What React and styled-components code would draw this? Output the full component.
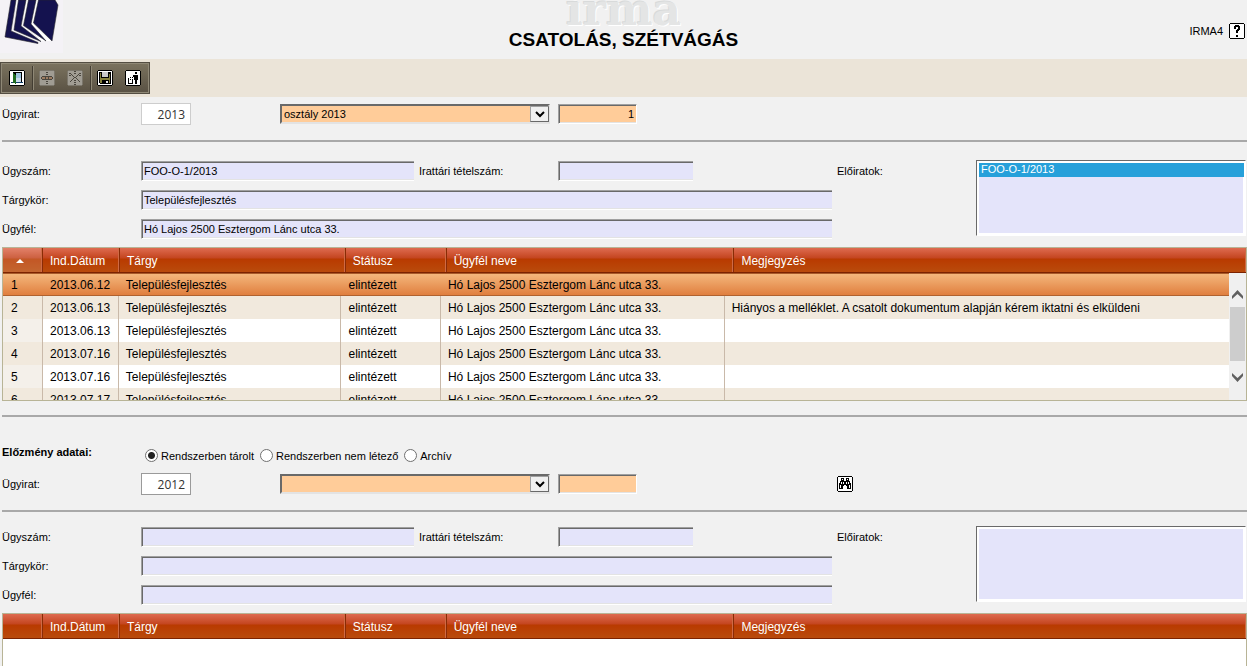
import { useState } from 'react';
import styled, { createGlobalStyle } from 'styled-components';

const rows = [
    { date: '2013.06.12', note: '' },
    { date: '2013.06.13', note: 'Hiányos a melléklet. A csatolt dokumentum alapján kérem iktatni és elküldeni' },
    { date: '2013.06.13', note: '' },
    { date: '2013.07.16', note: '' },
    { date: '2013.07.16', note: '' },
    { date: '2013.07.17', note: '' },
];

const sources = ['Rendszerben tárolt', 'Rendszerben nem létező', 'Archív'];

// 16x16 pixel icons share the same frame
const Frame = ({ faded, children }) => (
    <svg width="16" height="16" viewBox="0 0 16 16" shapeRendering="crispEdges" aria-hidden="true">
        <path d="M1 0h14v1h1v14h-1v1H1v-1H0V1h1z" fill={faded ? '#7b766b' : '#000'} />
        <path d="M1 1h14v14H1z" fill={faded ? '#a09c93' : '#fff'} />
        {children}
    </svg>
);

const DoorIcon = () => (
    <Frame>
        <path d="M4 2h9v10H4z" fill="#000" />
        <path d="M7 3h5v9H7z" fill="#9fc4de" />
        <path d="M7 8h5v4H7z" fill="#c9dcea" />
        <path d="M4 3h1v1h1v1h1v9H6v-1H4z" fill="#1f6b1f" />
        <path d="M2 12h2v1H2zM7 12h7v1H7z" fill="#14406b" />
    </Frame>
);

const AttachIcon = () => (
    <Frame faded>
        <path d="M7 2h2v1H7zM7 4h2v1H7zM7 11h2v1H7zM7 13h2v1H7z" fill="#4a463e" />
        <path d="M3 6h10v1h1v2h-1v1H3V9H2V7h1z" fill="#4a463e" />
        <path d="M3 7h3v2H3zM7 7h2v2H7zM10 7h3v2h-3z" fill="#9c7c62" />
    </Frame>
);

const CutIcon = () => (
    <Frame faded>
        <path d="M7 1h2v1H7zM7 3h2v1H7zM7 10h2v1H7zM7 12h2v1H7zM7 14h2v1H7z" fill="#4a463e" />
        <path
            d="M2 3h2v1H2zM4 4h1v1H4zM2 5h2v1H2zM5 5h1v1H5zM6 6h1v1H6zM7 7h2v1H7zM6 8h1v1H6zM5 9h1v1H5zM4 10h1v1H4zM3 11h1v1H3zM12 3h2v1h-2zM11 4h1v1h-1zM12 5h2v1h-2zM10 5h1v1h-1zM9 6h1v1H9zM9 8h1v1H9zM10 9h1v1h-1zM11 10h1v1h-1zM12 11h1v1h-1z"
            fill="#4a463e"
        />
    </Frame>
);

const SaveIcon = () => (
    <Frame>
        <path d="M2 2h12v12H3v-1H2z" fill="#000" />
        <path d="M3 3h1v10H3zM12 4h1v9h-1zM4 8h8v2H4z" fill="#85803a" />
        <path d="M4 9h1v4H4z" fill="#85803a" />
        <path d="M5 2h6v5H5z" fill="#c9c9c9" />
        <path d="M9 11h2v2H9z" fill="#e8e8e8" />
    </Frame>
);

const BinIcon = () => (
    <Frame>
        <path
            d="M10 2h2v2h-2zM8 5h5v5h-1v4h-2v-4H9V7H8V6H8zM3 8h1v1H3zM3 9h1v4h3V9h1v5H3zM5 7h1v1H5zM7 7h1v1H7zM5 9h1v1H5z"
            fill="#000"
        />
    </Frame>
);

const SearchIcon = () => (
    <Frame>
        <path d="M4 2h3v3h2V2h3v3h1v2h1v6h-4v-3H9V9H7v1H6v3H2V7h1V5h1z" fill="#000" />
        <path d="M5 3h1v1H5zM10 3h1v1h-1zM4 6h1v2H4zM11 6h1v2h-1zM3 9h1v3H3zM12 9h1v3h-1zM6 6h1v2H6zM9 6h1v2H9z" fill="#fff" />
    </Frame>
);

const HelpIcon = () => (
    <Frame>
        <path d="M6 2h4v1h1v4h-1v1H9v2H7V7h1V6h1V4H7v2H5V3h1zM7 12h2v2H7z" fill="#000" />
    </Frame>
);

const Logo = () => (
    <svg width="63" height="53" viewBox="0 0 63 53" aria-hidden="true">
        <path d="M0 0h63v53H0z" fill="#f4f2f6" />
        <path d="M11 0h45l2 5-6 36H40z" fill="#fff" />
        <g fill="#14124f" stroke="#26262b" strokeWidth="0.6">
            <path d="M11 0h5l-5 31 27 11.500v1L5 37z" />
            <path d="M18.500 0H26l-5 26 20 15.500L14 30z" />
            <path d="M28.500 0H36l-5 24 15 17-22.500-15.500z" />
            <path d="M38.500 0H55l3 5-6 36-18.500-18z" />
        </g>
    </svg>
);

const Chevron = ({ up }) => (
    <svg width="11" height="9" viewBox="0 0 11 9" aria-hidden="true">
        <path d={up ? 'M5.500 0L11 6v3L5.500 4 0 9V6z' : 'M5.500 9L11 3V0L5.500 5 0 0v3z'} fill="#606060" />
    </svg>
);

const CaseRow = ({ id, year, department, number, active, children }) => (
    <CaseGrid>
        <Label htmlFor={`${id}-year`}>Ügyirat:</Label>
        <CaseInputs>
            <YearInput id={`${id}-year`} defaultValue={year} $active={active} />
            <SelectBox>
                <Select aria-label="Osztály" defaultValue={department}>
                    <option>{department}</option>
                </Select>
                <SelectArrow>
                    <svg width="10" height="7" viewBox="0 0 10 7" aria-hidden="true">
                        <path d="M1 1l4 4 4-4" fill="none" stroke="#000" strokeWidth="2" />
                    </svg>
                </SelectArrow>
            </SelectBox>
        </CaseInputs>
        <NumberInput aria-label="Sorszám" defaultValue={number} />
        {children}
    </CaseGrid>
);

const Details = ({ id, number, subject, client, previous }) => (
    <DetailsGrid>
        <Label htmlFor={`${id}-number`}>Ügyszám:</Label>
        <Field id={`${id}-number`} defaultValue={number} />
        <Label htmlFor={`${id}-item`}>Irattári tételszám:</Label>
        <ShortField id={`${id}-item`} />
        <Label htmlFor={`${id}-previous`}>Előiratok:</Label>
        <ListBox id={`${id}-previous`} size="4" defaultValue={previous}>
            {previous && <option>{previous}</option>}
        </ListBox>
        <RowLabel htmlFor={`${id}-subject`}>Tárgykör:</RowLabel>
        <WideField id={`${id}-subject`} defaultValue={subject} />
        <RowLabel htmlFor={`${id}-client`}>Ügyfél:</RowLabel>
        <WideField id={`${id}-client`} defaultValue={client} />
    </DetailsGrid>
);

const DocumentTable = ({ items, sorted, fill }) => {
    const [selected, setSelected] = useState(0);

    return (
        <TableFrame $fill={fill}>
            <Table>
                <thead>
                    <HeadRow>
                        <HeadCell $sorted={sorted} aria-label="Sorszám">
                            {sorted && (
                                <svg width="8" height="4" viewBox="0 0 8 4" aria-hidden="true">
                                    <path d="M4 0l4 4H0z" fill="#fff" />
                                </svg>
                            )}
                        </HeadCell>
                        <HeadCell>Ind.Dátum</HeadCell>
                        <HeadCell>Tárgy</HeadCell>
                        <HeadCell>Státusz</HeadCell>
                        <HeadCell>Ügyfél neve</HeadCell>
                        <HeadCell>Megjegyzés</HeadCell>
                    </HeadRow>
                </thead>
                <TableBody $scroll={items.length > 0}>
                    {items.map((item, i) => (
                        <BodyRow key={i} $selected={i === selected} onClick={() => setSelected(i)}>
                            <Cell>{i + 1}</Cell>
                            <Cell>{item.date}</Cell>
                            <Cell>Településfejlesztés</Cell>
                            <Cell>elintézett</Cell>
                            <Cell>Hó Lajos 2500 Esztergom Lánc utca 33.</Cell>
                            <Cell>{item.note}</Cell>
                        </BodyRow>
                    ))}
                </TableBody>
            </Table>
            {items.length > 0 && (
                <ScrollBar>
                    <ScrollButton aria-label="Fel"><Chevron up /></ScrollButton>
                    <ScrollThumb />
                    <ScrollButton aria-label="Le"><Chevron /></ScrollButton>
                </ScrollBar>
            )}
        </TableFrame>
    );
};

const App = () => {
    const [source, setSource] = useState(sources[0]);

    return (
        <Page>
            <GlobalStyle />
            <Header>
                <Logo />
                <Heading>
                    <Watermark aria-hidden="true">irma</Watermark>
                    <Title>CSATOLÁS, SZÉTVÁGÁS</Title>
                </Heading>
                <Help>
                    IRMA4
                    <IconButton aria-label="Súgó"><HelpIcon /></IconButton>
                </Help>
            </Header>
            <ToolStrip>
                <Toolbar>
                    <ToolGroup><IconButton aria-label="Kilépés"><DoorIcon /></IconButton></ToolGroup>
                    <ToolGroup>
                        <IconButton aria-label="Csatolás" disabled><AttachIcon /></IconButton>
                        <IconButton aria-label="Szétvágás" disabled><CutIcon /></IconButton>
                    </ToolGroup>
                    <ToolGroup>
                        <IconButton aria-label="Mentés"><SaveIcon /></IconButton>
                        <IconButton aria-label="Törlés"><BinIcon /></IconButton>
                    </ToolGroup>
                </Toolbar>
            </ToolStrip>

            <CaseRow id="case" year="2013" department="osztály 2013" number="1" />
            <Line />
            <Details
                id="case"
                number="FOO-O-1/2013"
                subject="Településfejlesztés"
                client="Hó Lajos 2500 Esztergom Lánc utca 33."
                previous="FOO-O-1/2013"
            />
            <DocumentTable items={rows} sorted />

            <SectionLine />
            <SourceRow>
                <SourceTitle id="source-title">Előzmény adatai:</SourceTitle>
                <Radios role="radiogroup" aria-labelledby="source-title">
                    {sources.map((name) => (
                        <RadioLabel key={name}>
                            <Radio name="source" checked={source === name} onChange={() => setSource(name)} />
                            {name}
                        </RadioLabel>
                    ))}
                </Radios>
            </SourceRow>
            <CaseRow id="prev" year="2012" department="" number="" active>
                <SearchButton aria-label="Keresés"><SearchIcon /></SearchButton>
            </CaseRow>
            <Line $tight />
            <Details id="prev" />
            <DocumentTable items={[]} fill />
        </Page>
    );
};

export default App;

const GlobalStyle = createGlobalStyle`
    * {
        box-sizing : border-box;
    }
    body {
        margin : 0;
        background : #f1f1f1;
    }
    body, button, input, select {
        font-family : "Liberation Sans", Arial, sans-serif;
        font-size : 11px;
        color : #000;
    }
`

const Page = styled.div`
    display : flex;
    flex-direction : column;
    height : 100vh;
    min-width : 1000px;
    overflow : hidden;
`

const Header = styled.header`
    display : grid;
    grid-template-columns : 1fr auto 1fr;
    flex : none;
    height : 59px;
    overflow : hidden;
`

const Heading = styled.div`
    display : flex;
    flex-direction : column;
    align-items : center;
    justify-content : flex-end;
    padding-bottom : 8px;
`

const Watermark = styled.span`
    margin-bottom : 9px;
    font-family : "DejaVu Serif", serif;
    font-size : 44px;
    font-weight : bold;
    line-height : 20px;
    color : #e4e5e5;
    text-shadow : 1px 1px 0 #fff, -1px -1px 0 #d8dada;
`

const Title = styled.h1`
    margin : 0;
    font-size : 19px;
    line-height : 22px;
`

const Help = styled.div`
    display : flex;
    align-items : center;
    justify-content : flex-end;
    gap : 6px;
    padding : 3px 2px 0 0;
`

const IconButton = styled.button.attrs({ type: 'button' })`
    display : block;
    width : 16px;
    height : 16px;
    padding : 0;
    border : 0;
    background : none;
`

const ToolStrip = styled.div`
    flex : none;
    height : 38px;
    padding-top : 3px;
    background : #ebe4d8;
`

const Toolbar = styled.div`
    display : flex;
    align-items : center;
    width : 150px;
    height : 32px;
    padding-left : 2px;
    border : 1px solid #544e42;
    box-shadow : inset 0 0 0 1px #8f8876;
    background : linear-gradient(#7b735f, #595143);
`

const ToolGroup = styled.div`
    display : flex;
    align-items : center;
    gap : 12px;
    height : 24px;
    padding : 0 7px 0 6px;

    & + & {
        border-left : 1px solid #433d32;
        box-shadow : inset 1px 0 0 #8f8876;
    }
`

const Label = styled.label`
    line-height : 14px;
`

const RowLabel = styled(Label)`
    grid-column : 1;
`

const FormGrid = styled.div`
    display : grid;
    grid-template-columns : 139fr 278fr 139fr 279fr 139fr 270fr;
    align-items : center;
    flex : none;
    padding : 0 1px 0 2px;
`

const CaseGrid = styled(FormGrid)`
    height : 34px;
    margin-bottom : 9px;
`

const CaseInputs = styled.div`
    display : flex;
    grid-column : 2 / 4;
    align-items : center;
    justify-content : space-between;
    padding-right : 8px;
`

const YearInput = styled.input`
    width : 50px;
    height : 22px;
    padding : 0 5px;
    border : 1px solid ${({ $active }) => ($active ? '#9a9a9a' : '#cdcdcd')};
    background : #fff;
    color : #333;
    font-family : "Open Sans", sans-serif;
    font-size : 12px;
    text-align : right;
`

const SelectBox = styled.div`
    position : relative;
    width : 270px;
    height : 20px;
`

const Select = styled.select`
    width : 100%;
    height : 100%;
    padding : 0 2px;
    border : 2px solid;
    border-color : #696969 #e3e3e3 #e3e3e3 #696969;
    border-radius : 0;
    background : #ffcc99;
    appearance : none;
`

const SelectArrow = styled.span`
    position : absolute;
    top : 2px;
    right : 1px;
    display : flex;
    align-items : center;
    justify-content : center;
    width : 19px;
    height : 16px;
    border : 1px solid;
    border-color : #a0a0a0 #696969 #696969 #a0a0a0;
    background : #f0f0f0;
    pointer-events : none;
`

const SunkenInput = styled.input`
    width : 100%;
    height : 20px;
    padding : 0 2px;
    border : 1px solid;
    border-color : #a0a0a0 #fff #fff #a0a0a0;
    background : #e4e4fa;
    box-shadow : inset 1px 1px 0 #696969, inset 0 -1px 0 #e3e3e3;
`

const NumberInput = styled(SunkenInput)`
    width : 79px;
    background : #ffcc99;
    text-align : right;
`

const SearchButton = styled(IconButton)`
    grid-column : 5;
`

const DetailsGrid = styled(FormGrid)`
    grid-template-rows : repeat(3, 29px);
    margin-bottom : 4px;
`

const Field = styled(SunkenInput)`
    width : auto;
    margin-right : 5px;
    border-right : 0;
`

const ShortField = styled(SunkenInput)`
    width : 135px;
    border-right : 0;
`

const WideField = styled(Field)`
    grid-column : 2 / 5;
`

const ListBox = styled.select`
    grid-area : 1 / 6 / 4 / 7;
    align-self : start;
    height : 76px;
    margin-top : 4px;
    padding : 2px 1px 2px 2px;
    border : 1px solid;
    border-color : #696969 #fff #fff #696969;
    border-radius : 0;
    outline : 0;
    background : #e4e4fa;
    box-shadow : inset 0 0 0 2px #fff;
    overflow : hidden;

    option {
        height : 14px;
        min-height : 14px;
        padding : 0 2px;
        line-height : 14px;
    }
    option:checked {
        background : #26a0da linear-gradient(#26a0da, #26a0da);
        color : #fff;
    }
`

const Line = styled.hr`
    flex : none;
    width : auto;
    height : 2px;
    margin : 0 0 ${({ $tight }) => ($tight ? '10px' : '14px')} 2px;
    border : 0;
    background : #a9a9a9;
`

const SectionLine = styled(Line)`
    margin : 14px 0 0 2px;
`

const SourceRow = styled.div`
    display : grid;
    grid-template-columns : 139fr 1105fr;
    align-items : center;
    flex : none;
    height : 50px;
    padding : 21px 1px 0 2px;
`

const SourceTitle = styled.strong`
    padding-bottom : 2px;
    line-height : 14px;
`

const Radios = styled.div`
    display : flex;
    gap : 6px;
    padding : 6px 0 0 4px;
`

const RadioLabel = styled.label`
    display : flex;
    align-items : center;
    gap : 3px;
    line-height : 14px;
`

const Radio = styled.input.attrs({ type: 'radio' })`
    width : 13px;
    height : 13px;
    margin : 0;
    border : 1px solid #707070;
    border-radius : 50%;
    background : #fff;
    appearance : none;

    &:checked {
        background : radial-gradient(#222 0 3px, #fff 4px);
    }
`

const TableFrame = styled.div`
    display : grid;
    grid-template-columns : minmax(0, 1fr) 17px;
    grid-template-rows : 25px minmax(0, 1fr);
    flex : ${({ $fill }) => ($fill ? '1' : 'none')};
    height : ${({ $fill }) => ($fill ? 'auto' : '154px')};
    margin-left : 2px;
    border : 1px solid #b8b496;
    border-bottom-width : ${({ $fill }) => ($fill ? '0' : '1px')};
    background : #fff;
`

const Table = styled.table`
    display : flex;
    flex-direction : column;
    grid-area : 1 / 1 / 3 / 3;
    min-height : 0;
    font-size : 12px;

    thead {
        display : block;
    }
`

const TableRow = styled.tr`
    display : grid;
    grid-template-columns : 40px 77fr 226fr 101fr 288fr 512fr;
`

const HeadRow = styled(TableRow)`
    height : 25px;
    border-bottom : 1px solid #7c2300;
    background : linear-gradient(#de6b50, #c4451f 10px, #b93a00 11px, #b94b0c);
`

const HeadCell = styled.th`
    display : flex;
    align-items : center;
    justify-content : ${({ $sorted }) => ($sorted ? 'center' : 'flex-start')};
    padding : ${({ $sorted }) => ($sorted ? '2px 12px 0 7px' : '2px 7px 0')};
    border-right : 1px solid #8a2b05;
    box-shadow : inset -1px 0 0 #cf6a45;
    background : ${({ $sorted }) => ($sorted ? 'rgba(255, 255, 255, 0.15)' : 'none')};
    color : #fff;
    font-weight : normal;

    &:last-child {
        border-right : 0;
    }
`

const TableBody = styled.tbody`
    display : block;
    flex : 1;
    min-height : 0;
    margin-right : ${({ $scroll }) => ($scroll ? '17px' : '0')};
    overflow : hidden;
`

const Cell = styled.td`
    padding : 1px 7px 0;
    overflow : hidden;
    border-right : 1px solid #c9b9a9;
    line-height : 22px;
    white-space : nowrap;

    &:first-child {
        padding-left : 8px;
    }
    &:last-child {
        border-right : 0;
    }
`

const BodyRow = styled(TableRow)`
    height : 23px;
    background : #fff;

    &:nth-child(even) {
        background : #f1e9dd;
    }
    &:nth-child(odd) ${Cell}:first-child {
        background : #f4f0ea;
    }

    ${({ $selected }) => $selected && `
        &&& {
            border-top : 1px solid #a85a2a;
            border-bottom : 1px solid #b0622f;
            background : linear-gradient(#f4b77c, #e07f3f);
        }
        &&& > td {
            padding-top : 0;
            border-color : transparent;
        }
        &&&& > td:first-child {
            background : none;
        }
    `}
`

const ScrollBar = styled.div`
    display : flex;
    flex-direction : column;
    align-items : center;
    grid-area : 2 / 2;
    padding : 13px 0 11px;
    background : #f0f0f0;
`

const ScrollButton = styled.button.attrs({ type: 'button' })`
    display : flex;
    align-items : center;
    justify-content : center;
    width : 17px;
    height : 17px;
    padding : 0;
    border : 0;
    background : none;
`

const ScrollThumb = styled.div`
    width : 15px;
    height : 54px;
    margin : 4px 0 8px;
    background : #cdcdcd;
`
